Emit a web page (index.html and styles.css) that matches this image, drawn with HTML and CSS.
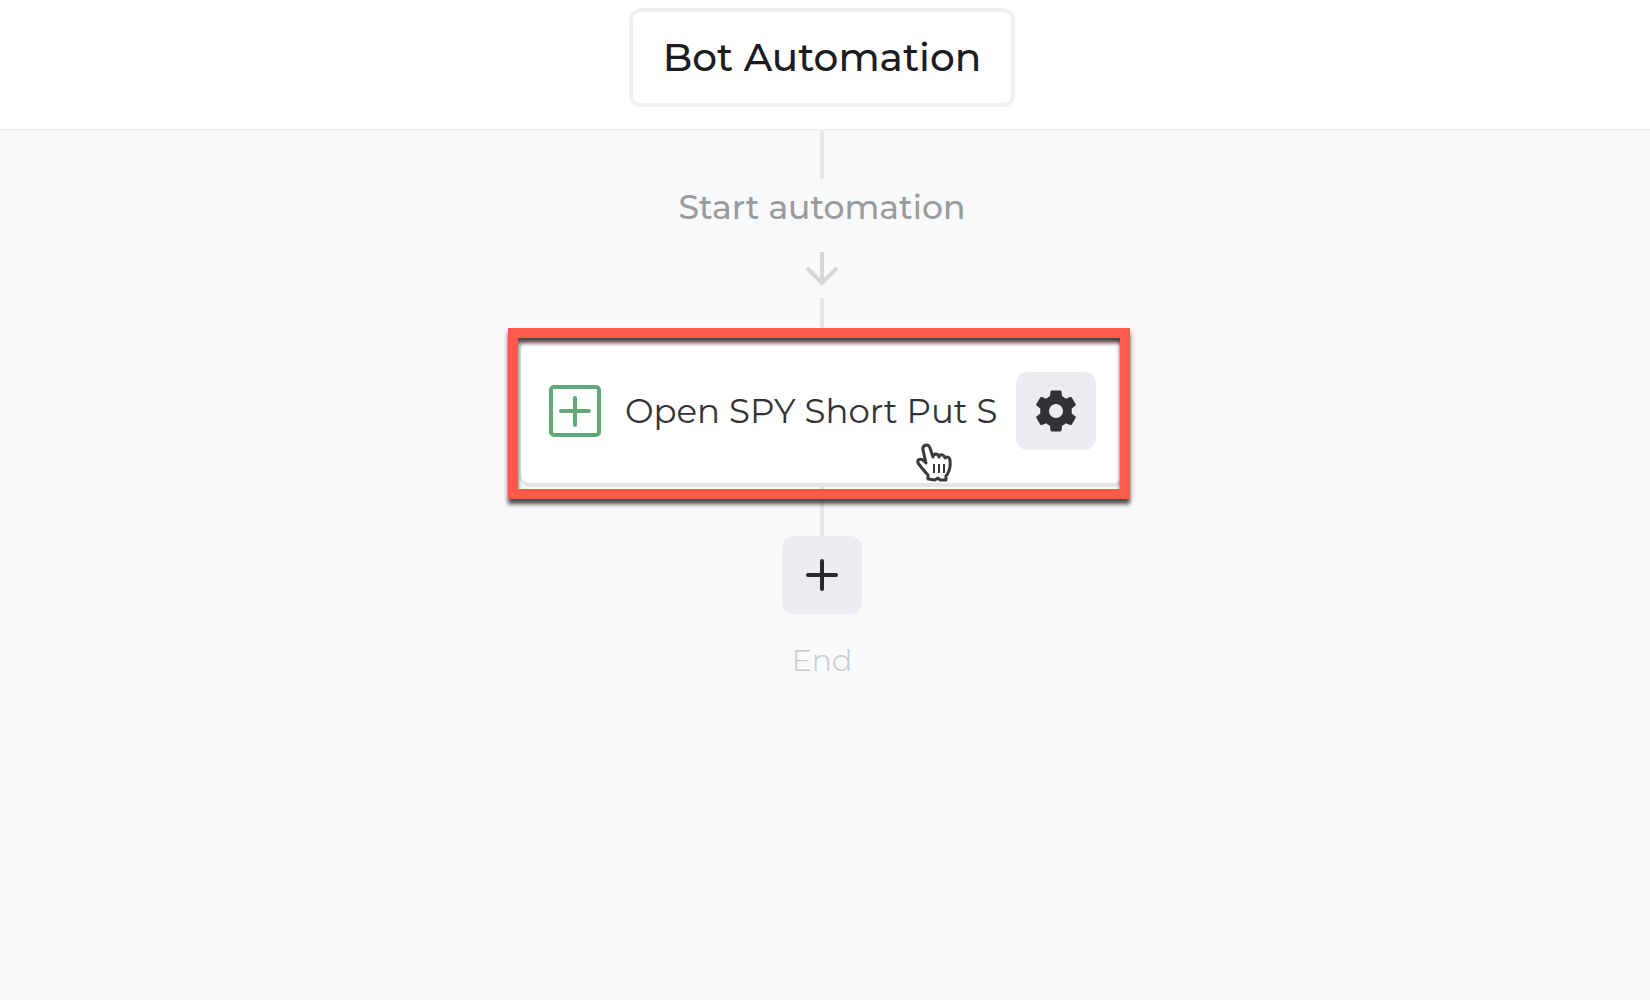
FILE: index.html
```html
<!DOCTYPE html>
<html lang="en">
<head>
    <meta charset="UTF-8">
    <meta name="viewport" content="width=device-width, initial-scale=1.0">
    <title>Bot Automation</title>
    <link rel="stylesheet" href="styles.css">
</head>
<body>
    <header class="header">
        <h1 class="title">Bot Automation</h1>
    </header>
    <main class="flow">
        <div class="line start-line"></div>
        <p class="start">Start automation</p>
        <svg class="arrow" viewBox="0 0 34 34" aria-hidden="true">
            <path d="M17 0V31M2 16L17 31L32 16"/>
        </svg>
        <div class="line arrow-line"></div>
        <section class="node">
            <svg class="open-icon" viewBox="0 0 52 52" aria-hidden="true">
                <rect x="2" y="2" width="48" height="48" rx="3"/>
                <path d="M26 13V40M12 26H40"/>
            </svg>
            <span class="node-name">Open SPY Short Put S</span>
            <button class="square" type="button" aria-label="Settings">
                <svg class="gear" viewBox="0 0 42 42" aria-hidden="true">
                    <path fill-rule="evenodd" d="M15.5 1.5Q15.7 0.5 17 0.5H25Q26.3 0.5 26.5 1.5L27 6.2Q29 7.1 30.9 8.7L35 7Q36.2 6.6 36.8 7.6L40.6 14Q41.2 15 40.3 15.8L36.6 18.4Q37 21 36.6 23.6L40.3 26.2Q41.2 27 40.6 28L36.8 34.4Q36.2 35.4 35 35L30.9 33.3Q29 34.9 27 35.8L26.5 40.5Q26.3 41.5 25 41.5H17Q15.7 41.5 15.5 40.5L15 35.8Q13 34.9 11.1 33.3L7 35Q5.8 35.4 5.2 34.4L1.4 28Q0.8 27 1.7 26.2L5.4 23.6Q5 21 5.4 18.4L1.7 15.8Q0.8 15 1.4 14L5.2 7.6Q5.8 6.6 7 7L11.1 8.7Q13 7.1 15 6.2ZM21 14A7 7 0 1 0 21 28A7 7 0 1 0 21 14Z"/>
                </svg>
            </button>
            <div class="highlight"></div>
            <svg class="pointer" viewBox="0 0 36 40" aria-hidden="true">
                <path d="M12 36V32C8 28 5 24 2 20C1 16 5 15 8 18L10 20L7 7C6 2 12 0 14 5L17 14C18 10 22 10 23 14C24 11 28 11 29 15C31 13 34 14 34 18C35 25 33 29 30 33V37H24L22 35L19 37Z"/>
                <path class="fingers" d="M18 21V30M23 21V30M28 21V30"/>
            </svg>
        </section>
        <div class="line end-line"></div>
        <button class="square" type="button" aria-label="Add action">
            <svg class="plus" viewBox="0 0 32 32" aria-hidden="true">
                <path d="M16 2V30M2 16H30"/>
            </svg>
        </button>
        <p class="end">End</p>
    </main>
</body>
</html>
```
FILE: styles.css
```css
*{
    padding: 0;
    margin: 0;
    box-sizing: border-box;
}
body
{
    display: flex;
    flex-direction: column;
    min-height: 100vh;
    background-color: #f8f9fb;
    font-family: Montserrat, Inter, sans-serif;
}
.header
{
    display: flex;
    justify-content: center;
    padding: 8px 6px 22px 0;
    background-color: white;
    border-bottom: 2px solid #f0f0f1;
}
.title
{
    padding: 20px 30px;
    border: 4px solid #f0f0f1;
    border-radius: 12px;
    color: #1c1c1e;
    font-size: 39px;
    line-height: 51px;
    font-weight: 500;
}
.flow
{
    display: flex;
    flex-direction: column;
    align-items: center;
    padding: 0 6px 40px 0;
}
.line
{
    width: 4px;
    background-color: #e5e5e7;
}
.start-line
{
    height: 48px;
}
.start
{
    padding: 8px 0 25px;
    color: #9b9b9d;
    font-size: 33px;
    line-height: 40px;
    font-weight: 500;
}
.arrow
{
    width: 34px;
    height: 34px;
    fill: none;
    stroke: #d6d6d8;
    stroke-width: 4;
}
.arrow-line
{
    height: 40px;
    margin-top: 12px;
}
.node
{
    position: relative;
    display: flex;
    align-items: center;
    gap: 24px;
    width: 100%;
    max-width: 606px;
    height: 149px;
    padding: 0 27px 2px 28px;
    background-color: white;
    border: 2px solid #e5e5e7;
    border-bottom-width: 4px;
    border-radius: 12px;
}
.open-icon
{
    flex: none;
    width: 52px;
    height: 52px;
    fill: none;
    stroke: #62a978;
    stroke-width: 4;
    stroke-linecap: round;
}
.node-name
{
    flex: 1;
    min-width: 0;
    color: #333335;
    font-size: 34px;
    line-height: 44px;
    white-space: nowrap;
}
.square
{
    display: flex;
    flex: none;
    align-items: center;
    justify-content: center;
    width: 80px;
    height: 78px;
    background-color: #ebebf0;
    border: none;
    border-radius: 12px;
    cursor: pointer;
}
.gear
{
    width: 42px;
    height: 42px;
    fill: #303236;
}
.plus
{
    width: 32px;
    height: 32px;
    stroke: #29292c;
    stroke-width: 4;
    stroke-linecap: round;
}
/* red box round the selected node */
.highlight
{
    position: absolute;
    top: -12px;
    right: -7px;
    bottom: -16px;
    left: -13px;
    border: 10px solid #ff594b;
    filter: drop-shadow(0 5px 2px rgba(0, 0, 0, 0.7));
    pointer-events: none;
}
.pointer
{
    position: absolute;
    right: 171px;
    bottom: 0;
    width: 36px;
    height: 40px;
    fill: white;
    stroke: #3a3a3c;
    stroke-width: 3;
    stroke-linejoin: round;
    pointer-events: none;
}
.fingers
{
    stroke-width: 2;
}
.end-line
{
    height: 49px;
}
.end
{
    padding-top: 25px;
    color: #c8c8ca;
    font-size: 30px;
    line-height: 44px;
    font-weight: 300;
}
```
